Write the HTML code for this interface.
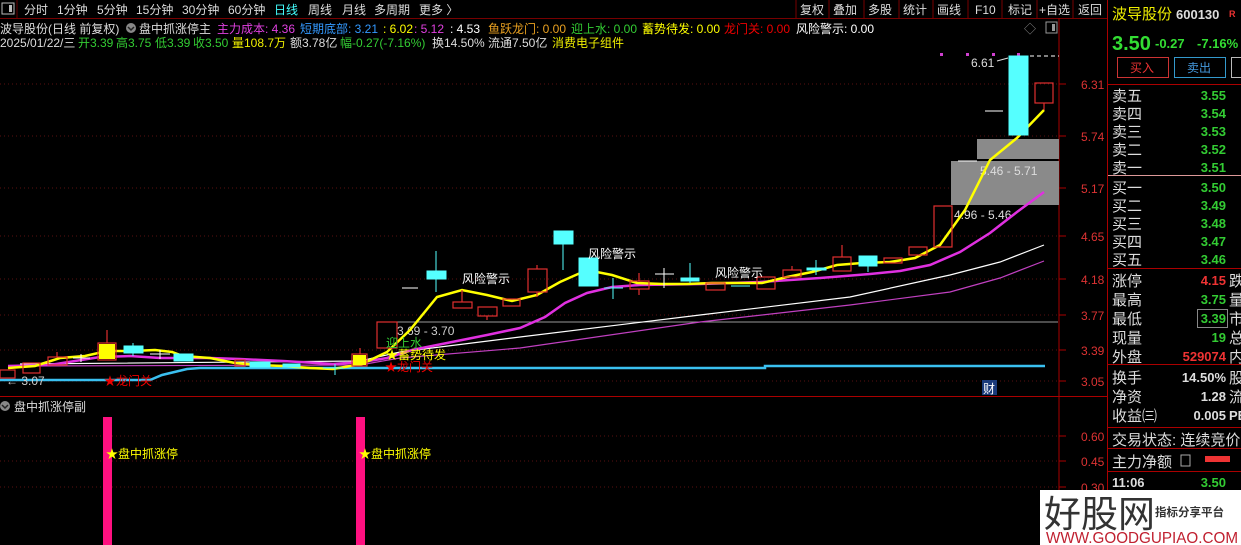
<!DOCTYPE html>
<html><head><meta charset="utf-8"><style>
html,body{margin:0;padding:0;background:#000;overflow:hidden}
svg{display:block}
</style></head><body>
<svg width="1241" height="545" viewBox="0 0 1241 545" xmlns="http://www.w3.org/2000/svg" font-family="Liberation Sans, Noto Sans CJK SC, sans-serif" font-size="12">
<rect width="1241" height="545" fill="#000"/>
<rect x="2" y="3" width="12" height="11" fill="none" stroke="#bbb"/><rect x="9" y="5" width="3" height="7" fill="#bbb"/>
<line x1="17" y1="0" x2="17" y2="18" stroke="#600"/>
<g fill="#ddd">
<text x="24" y="14">分时</text><text x="57" y="14">1分钟</text><text x="97" y="14">5分钟</text><text x="136" y="14">15分钟</text><text x="182" y="14">30分钟</text><text x="228" y="14">60分钟</text>
<text x="274" y="14" fill="#4ff">日线</text><text x="308" y="14">周线</text><text x="342" y="14">月线</text><text x="374" y="14">多周期</text><text x="419" y="14">更多 〉</text>
<text x="800" y="14">复权</text><text x="833" y="14">叠加</text><text x="868" y="14">多股</text><text x="903" y="14">统计</text><text x="937" y="14">画线</text><text x="975" y="14">F10</text><text x="1008" y="14">标记</text><text x="1039" y="14">+自选</text><text x="1078" y="14">返回</text>
</g>
<g stroke="#700">
<line x1="796" y1="0" x2="796" y2="18"/><line x1="829" y1="0" x2="829" y2="18"/><line x1="864" y1="0" x2="864" y2="18"/><line x1="899" y1="0" x2="899" y2="18"/><line x1="933" y1="0" x2="933" y2="18"/><line x1="968" y1="0" x2="968" y2="18"/><line x1="1002" y1="0" x2="1002" y2="18"/><line x1="1037" y1="0" x2="1037" y2="18"/><line x1="1073" y1="0" x2="1073" y2="18"/>
<line x1="0" y1="18.5" x2="1107" y2="18.5"/>
</g>
<g>
<text x="0" y="33" fill="#ddd">波导股份(日线 前复权)</text>
<circle cx="131" cy="28" r="5" fill="#888"/><path d="M128 27 l3 3 l3 -3" stroke="#222" stroke-width="1.5" fill="none"/>
<text x="139" y="33" fill="#ddd">盘中抓涨停主</text>
<text x="217" y="33" fill="#e040e0">主力成本: 4.36</text>
<text x="300" y="33" fill="#39f">短期底部: 3.21</text>
<text x="383" y="33" fill="#ff0">: 6.02</text>
<text x="414" y="33" fill="#e040e0">: 5.12</text>
<text x="450" y="33" fill="#fff">: 4.53</text>
<text x="488" y="33" fill="#e8a020">鱼跃龙门: 0.00</text>
<text x="571" y="33" fill="#3c3">迎上水: 0.00</text>
<text x="642" y="33" fill="#ff0">蓄势待发: 0.00</text>
<text x="724" y="33" fill="#e00">龙门关: 0.00</text>
<text x="796" y="33" fill="#fff">风险警示: 0.00</text>
<text x="1024" y="33" fill="#888">◇</text>
<rect x="1046" y="22" width="11" height="11" fill="none" stroke="#999"/><rect x="1052" y="24" width="3" height="7" fill="#999"/>
<text x="0" y="47" fill="#ddd">2025/01/22/三</text>
<text x="78" y="47" fill="#3c3">开3.39</text><text x="116" y="47" fill="#3c3">高3.75</text><text x="155" y="47" fill="#3c3">低3.39</text><text x="193" y="47" fill="#3c3">收3.50</text>
<text x="232" y="47" fill="#ee0">量108.7万</text><text x="290" y="47" fill="#ddd">额3.78亿</text>
<text x="340" y="47" fill="#3c3">幅-0.27(-7.16%)</text><text x="432" y="47" fill="#ddd">换14.50%</text><text x="488" y="47" fill="#ddd">流通7.50亿</text><text x="552" y="47" fill="#ee0">消费电子组件</text>
</g>
<g stroke="#5a1010" stroke-dasharray="1,3">
<line x1="0" y1="84" x2="1058" y2="84"/><line x1="0" y1="136" x2="1058" y2="136"/><line x1="0" y1="188" x2="1058" y2="188"/><line x1="0" y1="236" x2="1058" y2="236"/><line x1="0" y1="279" x2="1058" y2="279"/><line x1="0" y1="315" x2="1058" y2="315"/><line x1="0" y1="350" x2="1058" y2="350"/><line x1="0" y1="381" x2="1058" y2="381"/>
<line x1="0" y1="436" x2="1058" y2="436"/><line x1="0" y1="461" x2="1058" y2="461"/><line x1="0" y1="487" x2="1058" y2="487"/>
</g>
<g stroke="#a00"><line x1="1059" y1="18" x2="1059" y2="545"/><line x1="1107.5" y1="0" x2="1107.5" y2="545"/><line x1="0" y1="396.5" x2="1107" y2="396.5"/>
<line x1="1059" y1="84" x2="1066" y2="84"/><line x1="1059" y1="136" x2="1066" y2="136"/><line x1="1059" y1="188" x2="1066" y2="188"/><line x1="1059" y1="236" x2="1066" y2="236"/><line x1="1059" y1="279" x2="1066" y2="279"/><line x1="1059" y1="315" x2="1066" y2="315"/><line x1="1059" y1="350" x2="1066" y2="350"/><line x1="1059" y1="381" x2="1066" y2="381"/><line x1="1059" y1="436" x2="1066" y2="436"/><line x1="1059" y1="461" x2="1066" y2="461"/><line x1="1059" y1="487" x2="1066" y2="487"/></g>
<g fill="#d33">
<text x="1081" y="89">6.31</text><text x="1081" y="141">5.74</text><text x="1081" y="193">5.17</text><text x="1081" y="241">4.65</text><text x="1081" y="284">4.18</text><text x="1081" y="320">3.77</text><text x="1081" y="355">3.39</text><text x="1081" y="386">3.05</text>
<text x="1081" y="441">0.60</text><text x="1081" y="466">0.45</text><text x="1081" y="492">0.30</text>
</g>
<rect x="977" y="139" width="82" height="20" fill="#8a8a8a"/>
<rect x="951" y="161" width="108" height="44" fill="#8a8a8a"/>
<line x1="958" y1="161" x2="977" y2="161" stroke="#fff"/>
<text x="980" y="175" fill="#ddd">5.46 - 5.71</text>
<text x="954" y="219" fill="#ddd">4.96 - 5.46</text>
<line x1="395" y1="322" x2="1058" y2="322" stroke="#999"/>
<text x="397" y="335" fill="#ccc">3.69 - 3.70</text>
<line x1="1030" y1="56" x2="1059" y2="56" stroke="#fff" stroke-dasharray="4,3"/>
<text x="971" y="67" fill="#ddd">6.61</text><line x1="997" y1="61" x2="1008" y2="58" stroke="#ddd"/>
<g fill="#d040d0"><rect x="940" y="53" width="3" height="3"/><rect x="966" y="53" width="3" height="3"/><rect x="992" y="53" width="3" height="3"/><rect x="1017" y="53" width="3" height="3"/></g>
<polyline fill="none" stroke="#3ac0f0" stroke-width="2.5" points="0,380 150,380 162,375 187,369 200,368 765,368 765,366 1045,366"/>
<polyline fill="none" stroke="#c040c0" stroke-width="1.2" points="20,366 360,365 400,358 520,348 700,322 850,305 950,292 1000,278 1044,261"/>
<polyline fill="none" stroke="#fff" stroke-width="1.2" points="20,364 360,361 400,352 520,337 700,315 850,297 950,275 1000,262 1044,245"/>
<polyline fill="none" stroke="#e030e0" stroke-width="2.5" points="8,366 50,365 100,357 130,356 160,358 210,358 240,359 283,361 333,364 362,362 387,358 412,350 437,345 462,340 487,335 520,328 545,317 565,303 587,293 612,287 640,285 700,284 760,282 820,278 870,274 900,271 930,265 960,252 990,233 1017,212 1044,192"/>
<polyline fill="none" stroke="#ff0" stroke-width="2.5" points="8,368 35,366 60,358 85,356 107,351 132,351 155,350 172,352 183,356 210,358 235,363 258,365 283,366 310,368 333,369 362,364 387,352 410,330 437,297 462,290 487,295 512,301 537,295 560,282 587,270 612,275 637,283 662,284 687,284 712,283 737,283 762,283 787,277 812,272 837,265 862,263 890,262 915,258 940,245 965,210 990,160 1017,138 1044,110"/>
<g fill="none" stroke="#e03030" stroke-width="1.2">
<rect x="0" y="370" width="15" height="8"/>
<rect x="23" y="363" width="17" height="10"/>
<rect x="48" y="357" width="19" height="8"/><line x1="57" y1="352" x2="57" y2="357"/>
<rect x="98" y="343" width="18" height="17"/><line x1="107" y1="330" x2="107" y2="343"/>
<rect x="235" y="360" width="10" height="6"/>
<rect x="352" y="354" width="15" height="12"/><line x1="360" y1="348" x2="360" y2="354"/>
<rect x="377" y="322" width="20" height="26"/>
<rect x="453" y="302" width="19" height="6"/><line x1="462" y1="290" x2="462" y2="302"/>
<rect x="478" y="307" width="19" height="9"/><line x1="487" y1="316" x2="487" y2="320"/>
<rect x="503" y="299" width="17" height="7"/>
<rect x="528" y="269" width="19" height="23"/><line x1="537" y1="265" x2="537" y2="269"/><line x1="537" y1="292" x2="537" y2="297"/>
<rect x="630" y="281" width="19" height="8"/><line x1="639" y1="273" x2="639" y2="281"/><line x1="639" y1="289" x2="639" y2="295"/>
<rect x="706" y="283" width="19" height="7"/>
<rect x="757" y="277" width="18" height="12"/>
<rect x="783" y="270" width="18" height="7"/><line x1="792" y1="266" x2="792" y2="270"/>
<rect x="833" y="257" width="18" height="14"/><line x1="842" y1="245" x2="842" y2="257"/>
<rect x="884" y="258" width="18" height="5"/>
<rect x="909" y="247" width="18" height="8"/>
<rect x="934" y="206" width="18" height="41"/>
<rect x="1035" y="83" width="18" height="20"/><line x1="1044" y1="103" x2="1044" y2="110"/>
</g>
<rect x="99" y="344" width="16" height="15" fill="#ff0"/>
<rect x="353" y="355" width="13" height="10" fill="#ff0"/>
<g fill="#5ff" stroke="#5ff">
<rect x="124" y="346" width="19" height="7"/><line x1="133" y1="343" x2="133" y2="356"/>
<rect x="174" y="354" width="19" height="7"/>
<rect x="250" y="362" width="20" height="5"/>
<rect x="283" y="364" width="17" height="3"/>
<rect x="427" y="271" width="19" height="8"/><line x1="436" y1="251" x2="436" y2="292"/>
<rect x="554" y="231" width="19" height="13"/><line x1="563" y1="244" x2="563" y2="270"/>
<rect x="579" y="258" width="19" height="28"/>
<rect x="681" y="278" width="18" height="3"/><line x1="690" y1="263" x2="690" y2="283"/>
<rect x="807" y="268" width="19" height="2"/><line x1="816" y1="260" x2="816" y2="275"/>
<rect x="859" y="256" width="18" height="10"/><line x1="868" y1="266" x2="868" y2="272"/>
<rect x="1009" y="56" width="19" height="79"/>
<line x1="604" y1="288" x2="623" y2="288"/><line x1="613" y1="278" x2="613" y2="299"/>
<line x1="731" y1="286" x2="750" y2="286"/>
<line x1="323" y1="368" x2="343" y2="368"/><line x1="335" y1="364" x2="335" y2="375"/>
</g>
<g stroke="#fff">
<line x1="73" y1="358" x2="90" y2="358"/><line x1="81" y1="354" x2="81" y2="362"/>
<line x1="150" y1="354" x2="170" y2="354"/><line x1="160" y1="350" x2="160" y2="359"/>
<line x1="402" y1="288" x2="418" y2="288"/>
<line x1="655" y1="274" x2="674" y2="274"/><line x1="664" y1="268" x2="664" y2="288"/>
<line x1="985" y1="111" x2="1003" y2="111"/>
</g>
<g>
<text x="462" y="283" fill="#fff">风险警示</text>
<text x="588" y="258" fill="#fff">风险警示</text>
<text x="715" y="277" fill="#fff">风险警示</text>
<text x="6" y="385" fill="#ccc">← 3.07</text>
<text x="104" y="385" fill="#e00">★龙门关</text>
<text x="386" y="347" fill="#3c3">迎上水</text>
<text x="386" y="359" fill="#ff0">★蓄势待发</text>
<text x="385" y="371" fill="#e00">★龙门关</text>
<rect x="982" y="380" width="15" height="15" fill="#1a3a7a"/><text x="983" y="393" fill="#fff">财</text>
<circle cx="5" cy="406" r="5" fill="#888"/><path d="M2 405 l3 3 l3 -3" stroke="#222" stroke-width="1.5" fill="none"/>
<text x="14" y="411" fill="#ddd">盘中抓涨停副</text>
</g>
<rect x="103" y="417" width="9" height="128" fill="#ff1080"/>
<rect x="356" y="417" width="9" height="128" fill="#ff1080"/>
<text x="106" y="458" fill="#ff0">★盘中抓涨停</text>
<text x="359" y="458" fill="#ff0">★盘中抓涨停</text>
<g>
<text x="1112" y="19" fill="#ee0" font-size="15">波导股份</text>
<text x="1176" y="19" fill="#ddd" font-size="13" font-weight="bold">600130</text>
<text x="1229" y="17" fill="#e33" font-size="9" font-weight="bold">R</text>
<text x="1112" y="50" fill="#3d3" font-size="20" font-weight="bold">3.50</text>
<text x="1155" y="48" fill="#3d3" font-size="13" font-weight="bold">-0.27</text>
<text x="1197" y="48" fill="#3d3" font-size="13" font-weight="bold">-7.16%</text>
<rect x="1117.5" y="57.5" width="51" height="20" fill="none" stroke="#c33"/><text x="1130" y="72" fill="#e33">买入</text>
<rect x="1174.5" y="57.5" width="51" height="20" fill="none" stroke="#39c"/><text x="1187" y="72" fill="#49d">卖出</text>
<rect x="1231.5" y="57.5" width="20" height="20" fill="none" stroke="#bbb"/>
</g>
<g stroke="#a00"><line x1="1108" y1="84.5" x2="1241" y2="84.5"/><line x1="1108" y1="268.5" x2="1241" y2="268.5"/><line x1="1108" y1="364.5" x2="1241" y2="364.5"/><line x1="1108" y1="427.5" x2="1241" y2="427.5"/><line x1="1108" y1="448.5" x2="1241" y2="448.5"/><line x1="1108" y1="471.5" x2="1241" y2="471.5"/></g>
<line x1="1108" y1="175.5" x2="1241" y2="175.5" stroke="#d99"/>
<g font-size="15" fill="#ddd">
<text x="1112" y="101">卖五</text><text x="1112" y="119">卖四</text><text x="1112" y="137">卖三</text><text x="1112" y="155">卖二</text><text x="1112" y="173">卖一</text>
<text x="1112" y="193">买一</text><text x="1112" y="211">买二</text><text x="1112" y="229">买三</text><text x="1112" y="247">买四</text><text x="1112" y="265">买五</text>
<text x="1112" y="286">涨停</text><text x="1112" y="305">最高</text><text x="1112" y="324">最低</text><text x="1112" y="343">现量</text><text x="1112" y="362">外盘</text>
<text x="1112" y="383">换手</text><text x="1112" y="402">净资</text><text x="1112" y="421">收益㈢</text>
<text x="1112" y="445">交易状态: 连续竞价</text><text x="1112" y="467">主力净额</text>
<text x="1229" y="286">跌</text><text x="1229" y="305">量</text><text x="1229" y="324">市</text><text x="1229" y="343">总</text><text x="1229" y="362">内</text><text x="1229" y="383">股</text><text x="1229" y="402">流</text>
</g>
<rect x="1181" y="455" width="9" height="11" fill="none" stroke="#aaa"/>
<rect x="1205" y="456" width="25" height="6" fill="#e33"/>
<g font-weight="bold" font-size="13" text-anchor="end" fill="#3c3">
<text x="1226" y="100">3.55</text><text x="1226" y="118">3.54</text><text x="1226" y="136">3.53</text><text x="1226" y="154">3.52</text><text x="1226" y="172">3.51</text>
<text x="1226" y="192">3.50</text><text x="1226" y="210">3.49</text><text x="1226" y="228">3.48</text><text x="1226" y="246">3.47</text><text x="1226" y="264">3.46</text>
<text x="1226" y="285" fill="#e33">4.15</text><text x="1226" y="304">3.75</text><text x="1226" y="323">3.39</text><text x="1226" y="342">19</text><text x="1226" y="361" fill="#e33">529074</text>
<text x="1226" y="382" fill="#ddd">14.50%</text><text x="1226" y="401" fill="#ddd">1.28</text><text x="1226" y="420" fill="#ddd">0.005</text>
<text x="1226" y="487">3.50</text>
</g>
<text x="1229" y="420" fill="#ddd" font-weight="bold" font-size="13">PE</text>
<rect x="1197.5" y="309.5" width="30" height="18" fill="none" stroke="#888"/>
<text x="1112" y="487" fill="#ddd" font-weight="bold" font-size="13">11:06</text>
<rect x="1040" y="490" width="201" height="55" fill="#fff"/>
<text x="1044" y="527" fill="#333" font-size="37">好股网</text>
<line x1="1151" y1="504" x2="1151" y2="518" stroke="#333"/>
<text x="1155" y="516" fill="#333" font-size="11.5" font-weight="bold">指标分享平台</text>
<text x="1046" y="543" fill="#c02030" font-size="16" textLength="192" lengthAdjust="spacingAndGlyphs">WWW.GOODGUPIAO.COM</text>
</svg>
</body></html>
